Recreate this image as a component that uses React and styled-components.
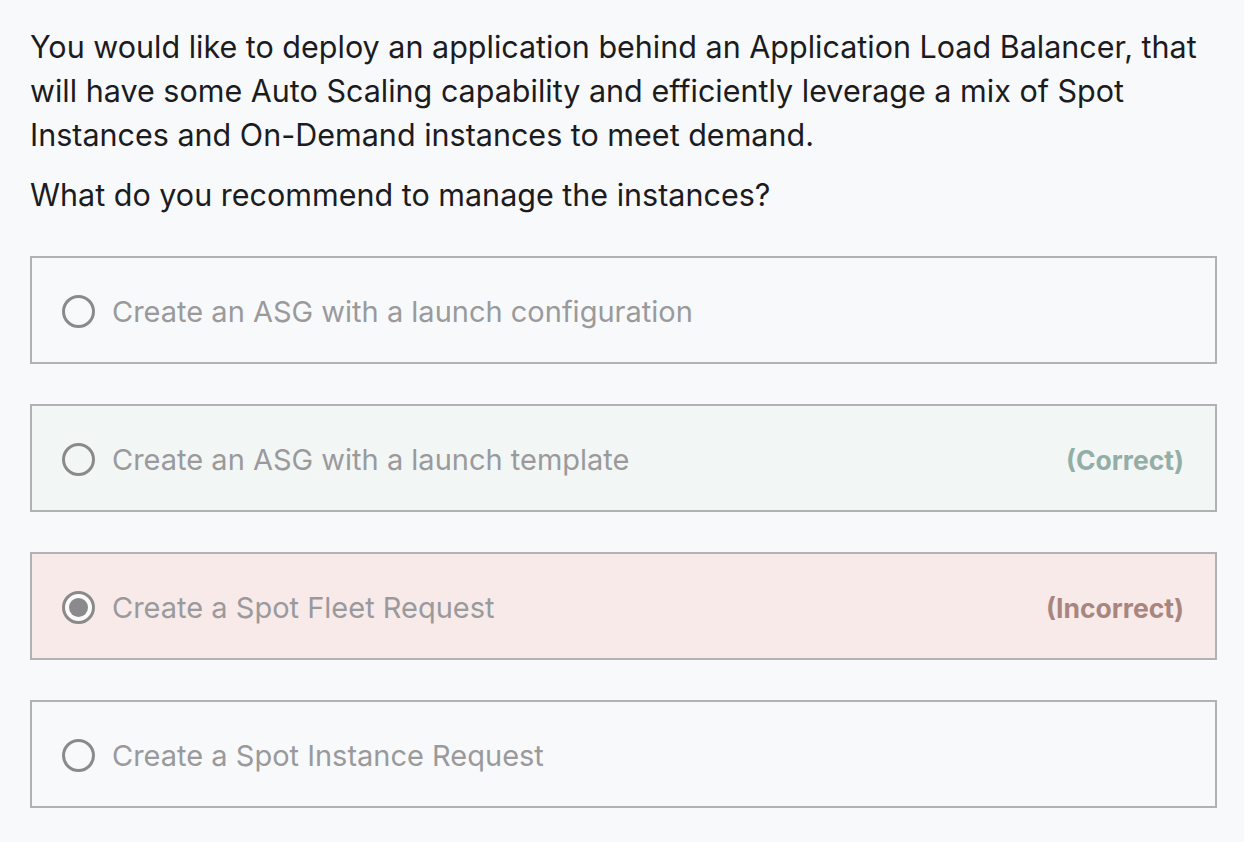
import React from 'react'
import styled, { createGlobalStyle } from 'styled-components'

const GlobalStyle = createGlobalStyle`
  html, body {
    margin: 0;
    background: #f8f9fb;
  }
  body {
    font-family: Inter, "Noto Sans", sans-serif;
    -webkit-font-smoothing: antialiased;
  }
`

const options = [
  { text: 'Create an ASG with a launch configuration' },
  { text: 'Create an ASG with a launch template', status: 'correct' },
  { text: 'Create a Spot Fleet Request', status: 'incorrect', selected: true },
  { text: 'Create a Spot Instance Request' },
]

const App = () => {
  return (
    <Page>
      <GlobalStyle />
      <Question>
        You would like to deploy an application behind an Application Load Balancer, that
        will have some Auto Scaling capability and efficiently leverage a mix of Spot
        Instances and On-Demand instances to meet demand.
      </Question>
      <Prompt>What do you recommend to manage the instances?</Prompt>
      <Options>
        {options.map((o) => (
          <Option key={o.text} status={o.status}>
            <Radio selected={o.selected} />
            <OptionText>{o.text}</OptionText>
            {o.status && (
              <Verdict status={o.status}>
                {o.status === 'correct' ? '(Correct)' : '(Incorrect)'}
              </Verdict>
            )}
          </Option>
        ))}
      </Options>
    </Page>
  )
}

export default App

const Page = styled.div`
  padding: 25px 27px 30px 30px;
  min-height: 842px;
  box-sizing: border-box;
`

const Question = styled.p`
  margin: 0;
  font-size: 30.5px;
  line-height: 44px;
  color: #1c1c1e;
`

const Prompt = styled(Question)`
  margin-top: 16px;
`

const Options = styled.div`
  display: flex;
  flex-direction: column;
  gap: 40px;
  margin-top: 39px;
`

const bg = {
  correct: '#f2f6f5',
  incorrect: '#f7eae9',
}

const Option = styled.div`
  display: flex;
  align-items: center;
  height: 108px;
  box-sizing: border-box;
  padding: 3px 31px 0 30px;
  border: 2px solid #b1b2b4;
  background: ${({ status }) => bg[status] || 'transparent'};
`

const Radio = styled.span`
  width: 33px;
  height: 33px;
  box-sizing: border-box;
  border-radius: 50%;
  border: 3px solid #8a8a8c;
  background: ${({ selected }) => (selected ? '#fdfafa' : 'transparent')};
  flex-shrink: 0;
  margin-right: 17px;
  position: relative;
  &::after {
    content: '';
    display: ${({ selected }) => (selected ? 'block' : 'none')};
    position: absolute;
    inset: 4px;
    border-radius: 50%;
    background: #8a8a8c;
  }
`

const OptionText = styled.span`
  flex: 1;
  font-size: 29px;
  line-height: 36px;
  color: #9a9a9c;
`

const Verdict = styled.span`
  font-size: 26.5px;
  line-height: 36px;
  font-weight: 700;
  color: ${({ status }) => (status === 'correct' ? '#93aea7' : '#a8867f')};
`
